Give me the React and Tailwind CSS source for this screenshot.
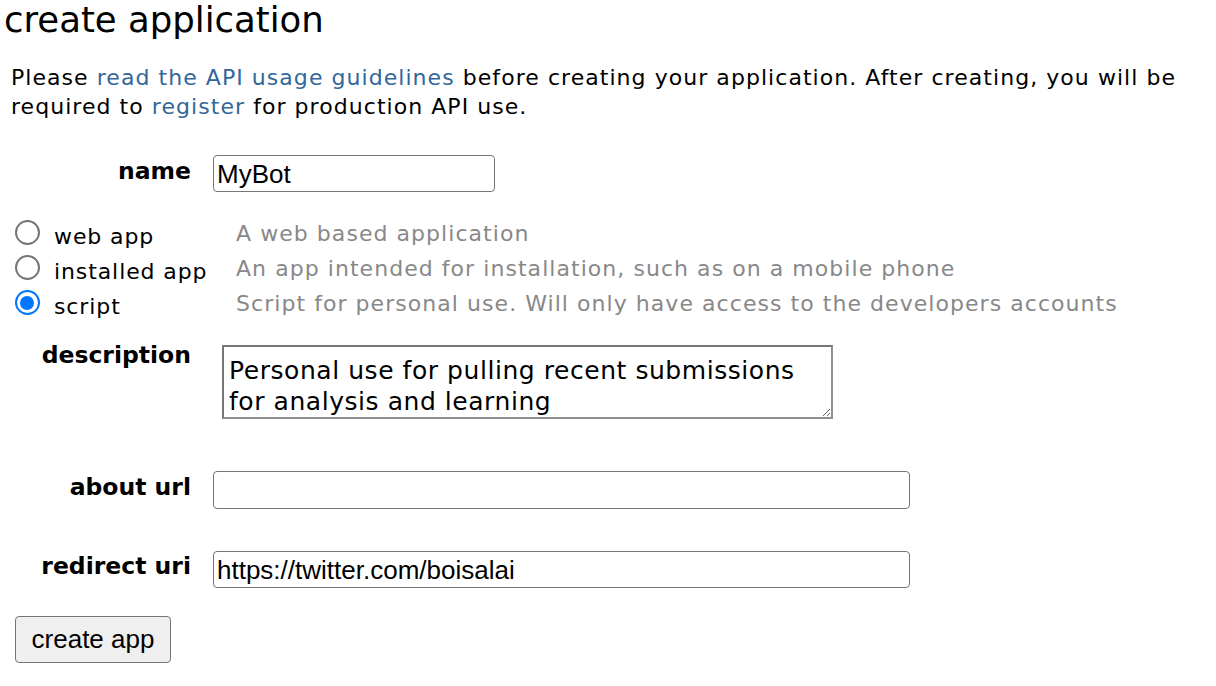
export default function App() {
  const radios = [
    { label: "web app", desc: "A web based application", checked: false },
    { label: "installed app", desc: "An app intended for installation, such as on a mobile phone", checked: false },
    { label: "script", desc: "Script for personal use. Will only have access to the developers accounts", checked: true },
  ];
  return (
    <div className="font-['DejaVu_Sans',Verdana,sans-serif] text-black bg-white w-[1216px] h-[686px] overflow-hidden">
      <h1 className="text-[35.5px] leading-[40px] ml-[4px] font-normal">create application</h1>
      <p className="mt-[23px] ml-[11px] w-[1190px] text-[22px] leading-[29px] tracking-[1.05px]">
        Please <a className="text-[#336699]">read the API usage guidelines</a> before creating your application. After creating, you will be required to <a className="text-[#336699]">register</a> for production API use.
      </p>

      <div className="mt-[34px] flex items-start">
        <div className="w-[191px] text-right font-bold text-[23.5px] leading-[30px] pt-[1px]">name</div>
        <input
          readOnly
          value="MyBot"
          className="ml-[22px] w-[282px] h-[37px] border border-[#767676] rounded-[4px] px-[3px] pt-[2px] font-['Liberation_Sans',Arial,sans-serif] text-[26px] text-black outline-none"
        />
      </div>

      <div className="mt-[23px] flex flex-col">
        {radios.map((r) => (
          <div key={r.label} className="flex items-center h-[35px]">
            <div className="ml-[14px] w-[26px] h-[26px] shrink-0 flex items-center justify-center">
              {r.checked ? (
                <div className="w-[25px] h-[25px] rounded-full border-[2.5px] border-[#0075ff] flex items-center justify-center bg-white">
                  <div className="w-[14px] h-[14px] rounded-full bg-[#0075ff]" />
                </div>
              ) : (
                <div className="w-[25px] h-[25px] rounded-full border-[2px] border-[#767676] bg-white" />
              )}
            </div>
            <div className="ml-[14px] w-[182px] text-[22px] leading-[35px] pt-[7px] tracking-[0.9px]">{r.label}</div>
            <div className="text-[22px] leading-[35px] pt-[2px] text-[#888888] whitespace-nowrap tracking-[1.05px]">{r.desc}</div>
          </div>
        ))}
      </div>

      <div className="mt-[25px] flex items-start">
        <div className="w-[191px] text-right font-bold text-[23.5px] leading-[30px] -mt-[5px]">description</div>
        <textarea
          readOnly
          defaultValue={"Personal use for pulling recent submissions for analysis and learning"}
          className="ml-[31px] w-[611px] h-[74px] border-2 border-t-[#767676] border-l-[#767676] border-r-[#8f8f8f] border-b-[#8f8f8f] px-[5px] pt-[8px] pb-[2px] text-[25px] leading-[31px] font-['DejaVu_Sans',Verdana,sans-serif] tracking-[0.55px] outline-none text-black resize"
        />
      </div>

      <div className="mt-[52px] flex items-start">
        <div className="w-[191px] text-right font-bold text-[23.5px] leading-[30px] pt-[1px]">about url</div>
        <input
          readOnly
          value=""
          className="ml-[22px] w-[697px] h-[38px] border border-[#767676] rounded-[4px] px-[3px] font-['Liberation_Sans',Arial,sans-serif] text-[26px] outline-none"
        />
      </div>

      <div className="mt-[42px] flex items-start">
        <div className="w-[191px] text-right font-bold text-[23.5px] leading-[30px]">redirect uri</div>
        <input
          readOnly
          value="https://twitter.com/boisalai"
          className="ml-[22px] w-[697px] h-[37px] border border-[#767676] rounded-[4px] px-[3px] pt-[2px] font-['Liberation_Sans',Arial,sans-serif] text-[26px] text-black outline-none"
        />
      </div>

      <button className="mt-[28px] ml-[15px] w-[156px] h-[47px] bg-[#efefef] border border-[#767676] rounded-[4px] font-['Liberation_Sans',Arial,sans-serif] text-[26px] text-black">
        create app
      </button>
    </div>
  );
}
